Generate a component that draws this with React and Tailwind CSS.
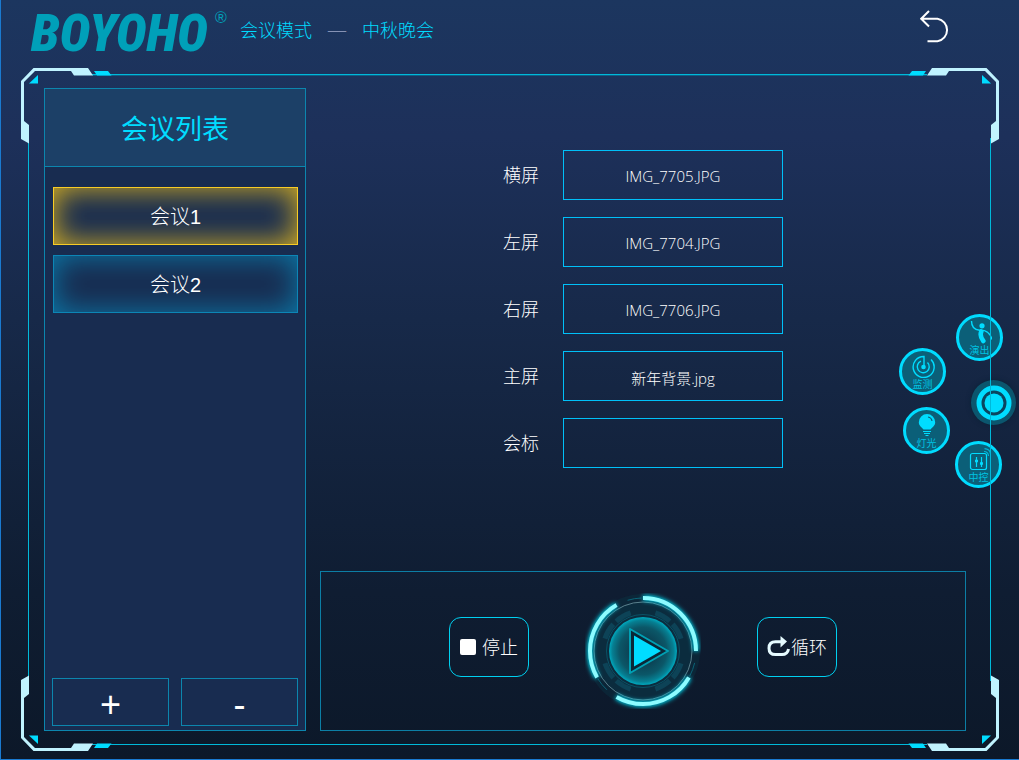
import clsx from "clsx";

const meetings = ["会议1", "会议2"];

const screens = [
  { id: "banner", label: "横屏", file: "IMG_7705.JPG" },
  { id: "left", label: "左屏", file: "IMG_7704.JPG" },
  { id: "right", label: "右屏", file: "IMG_7706.JPG" },
  { id: "main", label: "主屏", file: "新年背景.jpg" },
  { id: "title", label: "会标", file: "" },
];

const Corner = ({ className }) => (
  <svg width="92" height="76" viewBox="0 0 92 76" className={clsx("absolute pointer-events-none", className)}>
    <path d="M12.5 0H67L72 7.5H53L50 3H14L3 14V53L8 57V75.5L0 71V13Z" fill="#c0f3ff" />
    <path d="M73 3H87L90.5 7.5H76Z" fill="#00dcff" />
    <path d="M17 7V15.5H8Z" fill="#00dcff" />
  </svg>
);

const FrameLines = () => (
  <>
    <span className="absolute top-0 left-16 right-16 h-px bg-[#00b9da] shadow-[0_1px_0_#0c5f86]" />
    <span className="absolute bottom-0 left-16 right-16 h-px bg-[#00b9da]" />
    <span className="absolute left-0 top-16 bottom-16 w-px bg-[#00b9da]" />
    <span className="absolute right-0 top-16 bottom-16 w-px bg-[#00b9da]" />
    <Corner className="-left-[7px] -top-[6px]" />
    <Corner className="-right-2 -top-[6px] -scale-x-100" />
    <Corner className="-left-[7px] -bottom-[6px] -scale-y-100" />
    <Corner className="-right-2 -bottom-[6px] -scale-100" />
  </>
);

const BackIcon = () => (
  <svg width="31" height="34" viewBox="0 0 31 34" fill="none" stroke="#fff" strokeWidth="2">
    <path d="M9 1L1.2 8.8L9 16.5M1.5 8.8H17.5A11.4 11.4 0 0 1 17.5 31.3H7.5" />
  </svg>
);

const LoopIcon = () => (
  <svg width="24" height="22" viewBox="0 0 24 22">
    <path d="M15 5.8H8.5Q2 5.8 2 12.2T8.5 18.6H15Q20.5 18.6 21.5 13" fill="none" stroke="#e6fbff" strokeWidth="3" />
    <path d="M13.5 0L20 5.5L13.5 11.5Z" fill="#e6fbff" />
  </svg>
);

const PlayIcon = () => (
  <svg width="116" height="116" viewBox="0 0 116 116" fill="none">
    <defs>
      <radialGradient id="core">
        <stop offset="0.35" stopColor="#0c4052" />
        <stop offset="0.7" stopColor="#0b5768" />
        <stop offset="0.9" stopColor="#067f92" />
        <stop offset="1" stopColor="#00a9bf" />
      </radialGradient>
      <filter id="glow" x="-20%" y="-20%" width="140%" height="140%">
        <feGaussianBlur stdDeviation="2" />
      </filter>
    </defs>
    <circle cx="58" cy="58" r="57" fill="#0b2f40" fillOpacity="0.55" />
    <circle cx="58" cy="58" r="49" fill="#0b2c3e" stroke="#6f97a2" strokeWidth="0.8" />
    <circle cx="58" cy="58" r="40" stroke="#0d4357" strokeWidth="5" strokeDasharray="24 6 24 36" pathLength="360" transform="rotate(-72 58 58)" />
    <circle cx="58" cy="58" r="36.5" stroke="#0a5266" strokeWidth="1" />
    <circle cx="58" cy="58" r="34" fill="url(#core)" />
    <g transform="rotate(-90 58 58)">
      <circle cx="58" cy="58" r="53" stroke="#0a6377" strokeWidth="1" strokeDasharray="15 105" strokeDashoffset="17" pathLength="360" />
      <circle cx="58" cy="58" r="53" stroke="#00c8e0" strokeWidth="6" strokeDasharray="90 30" pathLength="360" filter="url(#glow)" />
      <circle cx="58" cy="58" r="53" stroke="#8dfbff" strokeWidth="4" strokeDasharray="90 30" pathLength="360" />
    </g>
    <path d="M45 36L83 58L45 80Z" fill="#0a2838" stroke="#00a0b4" strokeWidth="2" strokeLinejoin="round" />
    <path d="M49 42.5L76 58L49 73.5Z" fill="#00dcff" />
  </svg>
);

const ShowIcon = () => (
  <svg width="24" height="23" viewBox="0 0 24 23" fill="none" stroke="#00dcff">
    <circle cx="14" cy="4.8" r="2.6" fill="#00dcff" stroke="none" />
    <path d="M3.5 0C3.5 6 6.5 8.8 11.5 9.2C17 8.8 22 11.5 24 18.5" strokeWidth="1.4" />
    <path d="M13.3 10.5C11.8 14 13 17 15.3 20" strokeWidth="4.6" strokeLinecap="round" />
  </svg>
);

const MonitorIcon = () => (
  <svg width="24" height="23" viewBox="0 0 24 23" fill="none" stroke="#00dcff" strokeWidth="1.4">
    <path d="M13 12V1.5A10.5 10.5 0 1 0 20 4.5" />
    <path d="M10 6.2A6 6 0 1 0 16.5 7.5" />
    <circle cx="12.5" cy="12" r="1.6" fill="#00dcff" />
  </svg>
);

const LightIcon = () => (
  <svg width="24" height="23" viewBox="0 0 24 23" fill="none">
    <path d="M12 0A8.2 8.2 0 0 1 20.2 8.2C20.2 12 17 13 15.5 15.5H8.5C7 13 3.8 12 3.8 8.2A8.2 8.2 0 0 1 12 0Z" fill="#00dcff" />
    <path d="M13 3A4.8 4.8 0 0 1 17 7" stroke="#0b6078" strokeWidth="1.2" />
    <path d="M8 17.5H16M9 19.5H15M10.5 21.5H13.5" stroke="#00dcff" strokeWidth="1" />
  </svg>
);

const ControlIcon = () => (
  <svg width="24" height="23" viewBox="0 0 24 23" fill="none" stroke="#00dcff" strokeWidth="1.2">
    <rect x="3.5" y="5.5" width="16" height="16" rx="2" />
    <path d="M9.5 9V19M14.5 9V19" />
    <path d="M8 13H11M13 15.5H16" strokeWidth="2.6" />
    <path d="M17 3.5Q21 3.5 21.5 8M17.5 .7Q23 1 23.5 6" opacity="0.7" />
  </svg>
);

const shortcuts = [
  { name: "演出", icon: ShowIcon, place: "left-[57px] top-0" },
  { name: "监测", icon: MonitorIcon, place: "left-0 top-[34px]" },
  { name: "灯光", icon: LightIcon, place: "left-1 top-[93px]" },
  { name: "中控", icon: ControlIcon, place: "left-14 top-[127px]" },
];

// Round shortcuts fanned out around the floating ball at the window's edge
const FloatingMenu = () => (
  <nav className="absolute -right-6 top-60 w-[116px] h-[175px]">
    {shortcuts.map(({ name, icon: Icon, place }) => (
      <button
        key={name}
        className={clsx(
          "absolute flex flex-col items-center w-[47px] h-[47px] pt-1 rounded-full border-3 border-[#00dcff] bg-[#0b5f78] text-[#00c3e2] text-[10px] leading-[12px] font-normal",
          place
        )}
      >
        <Icon />
        <span>{name}</span>
      </button>
    ))}
    <button
      aria-label="菜单"
      className="absolute left-[72px] top-[66px] flex items-center justify-center size-[45px] rounded-full bg-[#0b566e] shadow-[0_0_5px_#0b2136]"
    >
      <svg width="36" height="36" viewBox="0 0 36 36">
        <circle cx="18" cy="18" r="15" fill="#0a4560" stroke="#00dcff" strokeWidth="5" />
        <circle cx="18" cy="18" r="9.5" fill="#00dcff" />
      </svg>
    </button>
  </nav>
);

const Header = () => (
  <header className="flex h-[74px] pl-[30px] pr-[68px]">
    <div className="flex w-[209px] text-[#00a0b9]">
      <span className="w-[184px] font-['Roboto_Condensed','Liberation_Sans_Narrow','Roboto'] text-[52px] leading-[68px] font-black italic">
        BOYOHO
      </span>
      <span className="pt-2 font-['Liberation_Sans'] text-[16px] leading-5">®</span>
    </div>
    <h1 className="flex gap-[15px] pt-[18px] text-lg leading-6 text-[#00dcff]">
      <span>会议模式</span>
      <span className="text-xl leading-6 text-[#8592b5]">—</span>
      <span>中秋晚会</span>
    </h1>
    <button aria-label="返回" className="ml-auto mt-2.5 self-start">
      <BackIcon />
    </button>
  </header>
);

const MeetingList = () => (
  <aside className="flex flex-col w-[262px] border border-[#0c86ae] bg-[#182c50]">
    <h2 className="h-[78px] border-b border-[#0c86ae] bg-[#1c4067] text-center text-[27px] leading-[80px] font-normal text-[#00dcff]">
      会议列表
    </h2>
    <ul className="flex flex-col flex-1 gap-2.5 pl-2 pr-[7px] pt-5">
      {meetings.map((name, i) => (
        <li key={name}>
          <button
            className={clsx(
              "w-full h-[58px] pt-0.5 border font-['Liberation_Sans','Noto_Sans_CJK_SC',sans-serif] font-light text-xl",
              i === 0
                ? "border-[#f8cc25] shadow-[inset_0_0_30px_#e0b61f]"
                : "border-[#0c86b6] shadow-[inset_0_0_30px_#0b7bab]"
            )}
          >
            {name}
          </button>
        </li>
      ))}
    </ul>
    <div className="grid grid-cols-2 gap-3 px-[7px] pb-1">
      <button className="h-12 border border-[#0c86ae] font-['Liberation_Sans'] text-4xl leading-[52px]">+</button>
      <button className="h-12 border border-[#0c86ae] font-['Liberation_Sans'] text-4xl leading-[52px]">-</button>
    </div>
  </aside>
);

const ScreenForm = () => (
  <form className="flex flex-col flex-1 items-center gap-[17px] pt-[62px]" onSubmit={(e) => e.preventDefault()}>
    {screens.map(({ id, label, file }) => (
      <div key={id} className="flex items-center gap-6">
        <label htmlFor={id} className="text-lg">{label}</label>
        <input
          id={id}
          type="text"
          readOnly
          defaultValue={file}
          className="w-[220px] h-[50px] pt-0.5 border border-[#00c0f8] bg-transparent text-center text-[15px] outline-none"
        />
      </div>
    ))}
  </form>
);

const PlayBar = () => (
  <div className="flex items-center justify-center gap-14 h-40 border border-[#0c7ea5]">
    <button className="flex items-center justify-center gap-1.5 w-20 h-[60px] mb-2 rounded-xl border border-[#00d0f0] text-lg">
      <span className="size-4 rounded-xs bg-white" />
      停止
    </button>
    <button aria-label="播放" className="rounded-full">
      <PlayIcon />
    </button>
    <button className="flex items-center justify-center w-20 h-[60px] mb-2 rounded-xl border border-[#00d0f0] text-lg">
      <LoopIcon />
      循环
    </button>
  </div>
);

const App = () => {
  return (
    <div className="flex flex-col min-h-screen border-l border-b border-[#1a7ad0] bg-[linear-gradient(#1c365f,#1d305a_18%,#172949_42%,#0f1d32_78%,#0c1829)] font-['Open_Sans','Noto_Sans_CJK_SC',sans-serif] font-light text-white">
      <Header />
      <main className="relative flex flex-1 gap-3.5 ml-[27px] mr-7 mb-3.5 pl-4 pr-[25px] py-3.5">
        <MeetingList />
        <section className="flex flex-col flex-1">
          <ScreenForm />
          <PlayBar />
        </section>
        <FloatingMenu />
        <FrameLines />
      </main>
    </div>
  );
};

export default App;
